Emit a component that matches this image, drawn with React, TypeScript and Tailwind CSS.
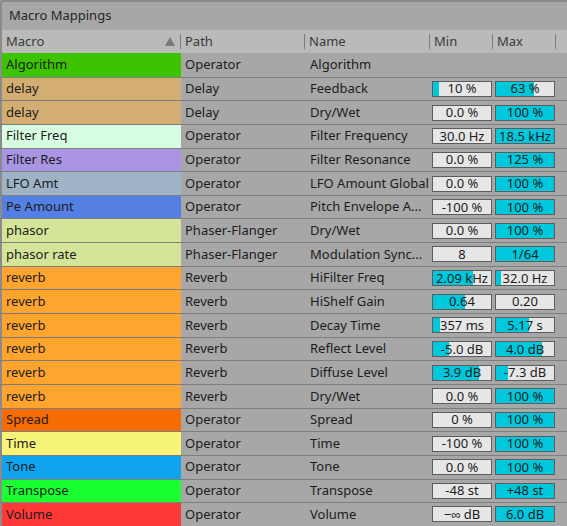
import React from "react";

type Row = {
  macro: string;
  color: string;
  path: string;
  name: string;
  min?: [string, number];
  max?: [string, number];
};

const rows: Row[] = [
  { macro: "Algorithm", color: "#3dc300", path: "Operator", name: "Algorithm" },
  { macro: "delay", color: "#d3ad72", path: "Delay", name: "Feedback", min: ["10 %", 10], max: ["63 %", 65] },
  { macro: "delay", color: "#d3ad72", path: "Delay", name: "Dry/Wet", min: ["0.0 %", 0], max: ["100 %", 100] },
  { macro: "Filter Freq", color: "#d6fde2", path: "Operator", name: "Filter Frequency", min: ["30.0 Hz", 0], max: ["18.5 kHz", 100] },
  { macro: "Filter Res", color: "#aa95e4", path: "Operator", name: "Filter Resonance", min: ["0.0 %", 0], max: ["125 %", 100] },
  { macro: "LFO Amt", color: "#9eb3c6", path: "Operator", name: "LFO Amount Global", min: ["0.0 %", 0], max: ["100 %", 100] },
  { macro: "Pe Amount", color: "#5480e3", path: "Operator", name: "Pitch Envelope A...", min: ["-100 %", 0], max: ["100 %", 100] },
  { macro: "phasor", color: "#d4e59a", path: "Phaser-Flanger", name: "Dry/Wet", min: ["0.0 %", 0], max: ["100 %", 100] },
  { macro: "phasor rate", color: "#d4e59a", path: "Phaser-Flanger", name: "Modulation Sync...", min: ["8", 0], max: ["1/64", 100] },
  { macro: "reverb", color: "#ffa52f", path: "Reverb", name: "HiFilter Freq", min: ["2.09 kHz", 69], max: ["32.0 Hz", 8] },
  { macro: "reverb", color: "#ffa52f", path: "Reverb", name: "HiShelf Gain", min: ["0.64", 55], max: ["0.20", 0] },
  { macro: "reverb", color: "#ffa52f", path: "Reverb", name: "Decay Time", min: ["357 ms", 12], max: ["5.17 s", 57] },
  { macro: "reverb", color: "#ffa52f", path: "Reverb", name: "Reflect Level", min: ["-5.0 dB", 28], max: ["4.0 dB", 79] },
  { macro: "reverb", color: "#ffa52f", path: "Reverb", name: "Diffuse Level", min: ["3.9 dB", 79], max: ["-7.3 dB", 20] },
  { macro: "reverb", color: "#ffa52f", path: "Reverb", name: "Dry/Wet", min: ["0.0 %", 0], max: ["100 %", 100] },
  { macro: "Spread", color: "#f66c03", path: "Operator", name: "Spread", min: ["0 %", 0], max: ["100 %", 100] },
  { macro: "Time", color: "#f7f479", path: "Operator", name: "Time", min: ["-100 %", 0], max: ["100 %", 100] },
  { macro: "Tone", color: "#10a4ee", path: "Operator", name: "Tone", min: ["0.0 %", 0], max: ["100 %", 100] },
  { macro: "Transpose", color: "#1aff2f", path: "Operator", name: "Transpose", min: ["-48 st", 0], max: ["+48 st", 100] },
  { macro: "Volume", color: "#ff3838", path: "Operator", name: "Volume", min: ["\u2212\u221e dB", 0], max: ["6.0 dB", 100] },
];

const ValueBox = ({ value }: { value?: [string, number] }) => {
  if (!value) return null;
  const [label, pct] = value;
  return (
    <div className="relative h-[16px] w-[60px] border border-[#5c5c5c] bg-[#e6e6e6] overflow-hidden">
      <div className="absolute inset-y-0 left-0 bg-[#00c8dc]" style={{ width: `${pct}%` }} />
      <div className="relative flex h-full items-center justify-center leading-none">{label}</div>
    </div>
  );
};

const HeaderCell = ({ label, width, sort }: { label: string; width: string; sort?: boolean }) => (
  <div className={`flex h-full items-center border-r border-[#7c7c7c] pl-[4px] pr-[5px] ${width}`}>
    <span className="flex-1">{label}</span>
    {sort && (
      <svg width="10" height="9" viewBox="0 0 10 9">
        <path d="M5 0 L10 9 L0 9 Z" fill="#7a7a7a" />
      </svg>
    )}
  </div>
);

export default function App() {
  return (
    <div
      className="h-[526px] w-[567px] overflow-hidden bg-[#a7a7a7] text-[13px] text-[#1c1c1c]"
      style={{ fontFamily: '"Noto Sans", "Liberation Sans", sans-serif' }}
    >
      <div className="h-full w-full rounded-tl-[3px] border-l-2 border-t-2 border-[#8b8b8b]">
        <div className="flex h-[28px] items-center pl-[7px] text-[#262626]">Macro Mappings</div>
        <div className="flex h-[23px] items-center bg-[#bababa] py-[4px] text-[#3a3a3a]">
          <HeaderCell label="Macro" width="w-[179px]" sort />
          <HeaderCell label="Path" width="w-[124px]" />
          <HeaderCell label="Name" width="w-[125px]" />
          <HeaderCell label="Min" width="w-[63px]" />
          <HeaderCell label="Max" width="w-[63px]" />
        </div>
        <div className="-ml-[2px]">
          {rows.map((r, i) => (
            <div
              key={i}
              className={`flex h-[23.65px] items-stretch border-[#7e7e7e] pl-[2px] ${i > 0 ? "border-t" : ""}`}
            >
              <div className="flex w-[179px] items-center pl-[4px]" style={{ backgroundColor: r.color }}>
                {r.macro}
              </div>
              <div className="flex w-[124px] items-center pl-[4px]">{r.path}</div>
              <div className="flex w-[125px] items-center pl-[5px] whitespace-nowrap">{r.name}</div>
              <div className="flex w-[63px] items-center pl-[2px]">
                <ValueBox value={r.min} />
              </div>
              <div className="flex w-[63px] items-center pl-[2px]">
                <ValueBox value={r.max} />
              </div>
            </div>
          ))}
        </div>
      </div>
    </div>
  );
}
